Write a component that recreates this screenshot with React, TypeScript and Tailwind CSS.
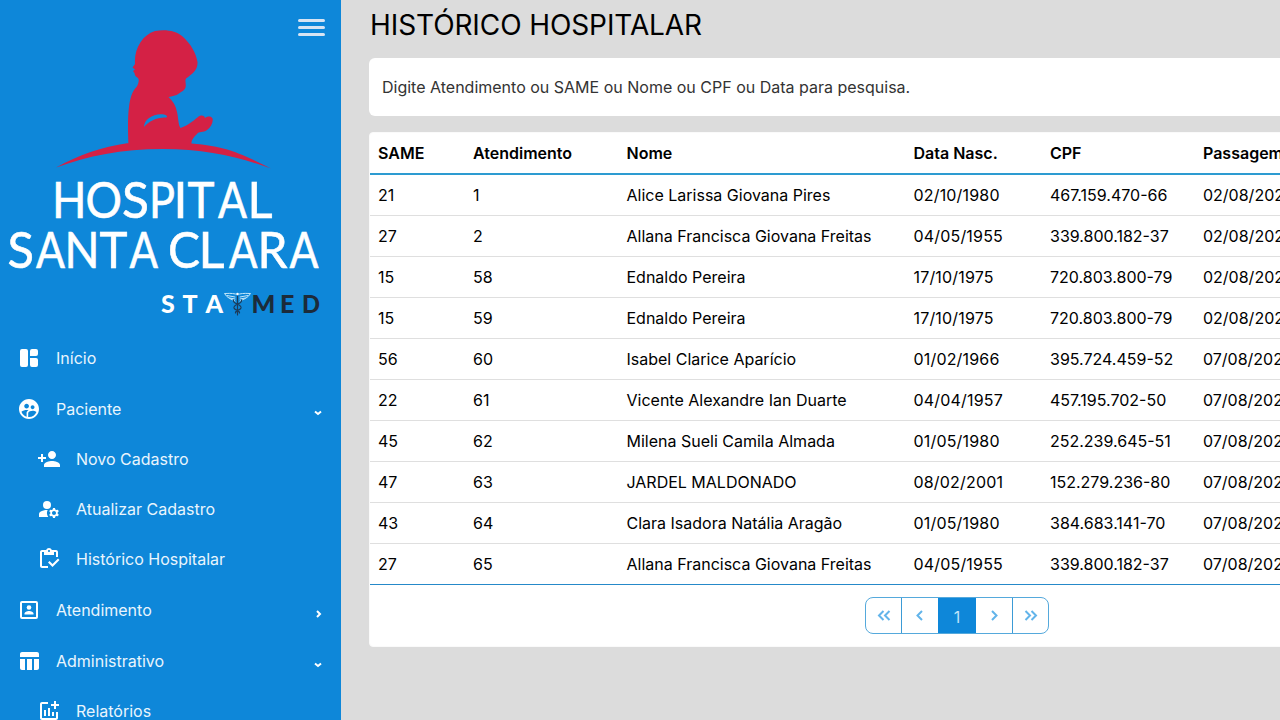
import type { ComponentType } from "react";
import {
  MdSupervisedUserCircle,
  MdPersonAdd,
  MdManageAccounts,
  MdOutlineInventory,
  MdTableChart,
  MdOutlineAddchart,
} from "react-icons/md";

type Icon = ComponentType<{ className?: string }>;
type Entry = { label: string; icon: Icon; sub?: boolean; arrow?: "down" | "right" };

function DashboardIcon({ className }: { className?: string }) {
  return (
    <svg viewBox="0 0 24 24" fill="currentColor" className={className}>
      <path d="M5 3h4a2 2 0 0 1 2 2v14a2 2 0 0 1-2 2H5a2 2 0 0 1-2-2V5a2 2 0 0 1 2-2ZM13 5a2 2 0 0 1 2-2h4a2 2 0 0 1 2 2v3a2 2 0 0 1-2 2h-6ZM13 12h6a2 2 0 0 1 2 2v5a2 2 0 0 1-2 2h-4a2 2 0 0 1-2-2Z" />
    </svg>
  );
}

function AccountIcon({ className }: { className?: string }) {
  return (
    <svg viewBox="0 0 24 24" className={className}>
      <rect x="4" y="4" width="16" height="16" rx="1" fill="none" stroke="currentColor" strokeWidth="2" />
      <circle cx="12" cy="9.500" r="2.300" fill="currentColor" />
      <path d="M7.500 16.500v-.9c0-1.700 3-2.600 4.500-2.600s4.500.9 4.500 2.600v.9Z" fill="currentColor" />
    </svg>
  );
}

function PersonAddIcon({ className }: { className?: string }) {
  return <MdPersonAdd className={className} />;
}

const menu: Entry[] = [
  { label: "Início", icon: DashboardIcon },
  { label: "Paciente", icon: MdSupervisedUserCircle, arrow: "down" },
  { label: "Novo Cadastro", icon: PersonAddIcon, sub: true },
  { label: "Atualizar Cadastro", icon: MdManageAccounts, sub: true },
  { label: "Histórico Hospitalar", icon: MdOutlineInventory, sub: true },
  { label: "Atendimento", icon: AccountIcon, arrow: "right" },
  { label: "Administrativo", icon: MdTableChart, arrow: "down" },
  { label: "Relatórios", icon: MdOutlineAddchart, sub: true },
];

const headers = ["SAME", "Atendimento", "Nome", "Data Nasc.", "CPF", "Passagem"];

const rows = [
  ["21", "1", "Alice Larissa Giovana Pires", "02/10/1980", "467.159.470-66", "02/08/2022"],
  ["27", "2", "Allana Francisca Giovana Freitas", "04/05/1955", "339.800.182-37", "02/08/2022"],
  ["15", "58", "Ednaldo Pereira", "17/10/1975", "720.803.800-79", "02/08/2022"],
  ["15", "59", "Ednaldo Pereira", "17/10/1975", "720.803.800-79", "02/08/2022"],
  ["56", "60", "Isabel Clarice Aparício", "01/02/1966", "395.724.459-52", "07/08/2022"],
  ["22", "61", "Vicente Alexandre Ian Duarte", "04/04/1957", "457.195.702-50", "07/08/2022"],
  ["45", "62", "Milena Sueli Camila Almada", "01/05/1980", "252.239.645-51", "07/08/2022"],
  ["47", "63", "JARDEL MALDONADO", "08/02/2001", "152.279.236-80", "07/08/2022"],
  ["43", "64", "Clara Isadora Natália Aragão", "01/05/1980", "384.683.141-70", "07/08/2022"],
  ["27", "65", "Allana Francisca Giovana Freitas", "04/05/1955", "339.800.182-37", "07/08/2022"],
];

const columns = "grid grid-cols-[95px_153.5px_287px_136.5px_153px_160px] pl-2";

// Letter, left edge and advance width of each glyph in the wordmark.
type Glyph = [string, number, number];
const hospital: Glyph[] = [
  ["H", 52, 34.5], ["O", 85.5, 36.5], ["S", 122, 27], ["P", 149, 26],
  ["I", 173.5, 14], ["T", 187.5, 27], ["A", 218, 29], ["L", 247.5, 25],
];
const santaClara: Glyph[] = [
  ["S", 7.5, 26.5], ["A", 36, 29], ["N", 64.5, 35], ["T", 99.5, 28], ["A", 129.5, 28.5],
  ["C", 168, 32], ["L", 198.5, 26], ["A", 229, 28.5], ["R", 257.5, 30], ["A", 289.5, 29],
];

function Wordmark({ glyphs, y }: { glyphs: Glyph[]; y: number }) {
  return (
    <text y={y} fontSize="50" fill="#fff" stroke="#fff" strokeWidth="0.6">
      {glyphs.map(([letter, x, width], i) => (
        <tspan key={i} x={x} textLength={width} lengthAdjust="spacingAndGlyphs">{letter}</tspan>
      ))}
    </text>
  );
}

function Logo() {
  return (
    <svg width="341" height="332" viewBox="0 0 341 332" className="block shrink-0">
      <g fill="#d42145">
        <path d="M128.500 146 C128 134 127.500 118 129 107 C130 99 132 91 136.500 87 C138.500 84 139.500 80 138 78 C136 77 134.500 75 134.500 73 L133 71 L135 69.500 L132.500 67.500 L135 64 C134 49 142 35 155 31 C166 29 176 31 182 36 C191 44 196 53 197.500 62 C198 70 192 74 186 78.500 C184.500 81 186.500 84 185.500 87.500 C184 91 182 91 179 93.500 C176 96 172 96 168.500 97 C173 101 176 106 177 112 C178.500 118 178 124 180.500 128 C187 126 193 121 198 117 C201 115 204 115 205 118 C208 116 211 116 212.500 118.500 C213.500 122 211 127 207 130 C203 133 199 131 197 134 C194 137 191 140 191.500 143.500 C229 146 247 157 271 168.500 C239 157 206 149 163 149 C121 149 88 156 56 167.500 C79 155 101 147 128.500 143 Z" />
      </g>
      <path d="M144 127 C144 119 154 113 164 114.500 C166 115 168 116 166.500 117.500 C157 117 149 121 144 127 Z" fill="#0e87d9" />
      <g fontFamily="Lato, sans-serif">
        <Wordmark glyphs={hospital} y={218} />
        <Wordmark glyphs={santaClara} y={268} />
      </g>
      <g fontFamily="Lato, sans-serif" fontWeight="900" fontSize="25">
        <text x="161" y="313" fill="#fff">S</text>
        <text x="182.500" y="313" fill="#fff">T</text>
        <text x="205.500" y="313" fill="#fff">A</text>
        <text x="251.500" y="313" fill="#1c2b3a">M</text>
        <text x="280" y="313" fill="#1c2b3a">E</text>
        <text x="302" y="313" fill="#1c2b3a" textLength="18" lengthAdjust="spacingAndGlyphs">D</text>
      </g>
      <g fill="none" strokeLinecap="round">
        <path d="M235.500 294 C231 293 228 293.500 224.500 293.500 C227 298 231 299 235 301 M227 295.500 L235 297 M229.500 298 L235 299 M239.500 294 C244 293 247 293.500 250.500 293.500 C248 298 244 299 240 301 M248 295.500 L240 297 M245.500 298 L240 299" stroke="#c3e8fb" strokeWidth="1" />
        <path d="M237.500 296 V315 M233.500 300 C232 304 242 304 241 308 C240 311 235 310 235.500 313 M241.500 300 C243 304 233 304 234 308 C235 311 240 310 239.500 313" stroke="#1c3b59" strokeWidth="1.200" />
        <circle cx="237.500" cy="294" r="1.300" fill="#fff" />
      </g>
    </svg>
  );
}

function Arrow({ direction }: { direction: "down" | "right" }) {
  return (
    <svg width="8" height="8" viewBox="0 0 8 8" className="relative top-1 ml-auto" fill="none" stroke="#fff" strokeWidth="2">
      <path d={direction === "down" ? "M1 2.500 L4 5 L7 2.500" : "M3 1 L6 4 L3 7"} />
    </svg>
  );
}

function Chevrons({ left, double }: { left?: boolean; double?: boolean }) {
  const d = left
    ? double ? "M7.500 2 L3 6.500 L7.500 11 M13.500 2 L9 6.500 L13.500 11" : "M10 2 L5.500 6.500 L10 11"
    : double ? "M2.500 2 L7 6.500 L2.500 11 M8.500 2 L13 6.500 L8.500 11" : "M6 2 L10.500 6.500 L6 11";
  return (
    <svg width="16" height="13" viewBox="0 0 16 13" fill="none" stroke="#62b4ea" strokeWidth="2" className="-mt-px">
      <path d={d} />
    </svg>
  );
}

export default function App() {
  return (
    <div className="flex h-[720px] w-[1280px] overflow-hidden bg-[#dcdcdc] font-['Inter',sans-serif] text-base text-black">
      <aside className="relative flex w-[341px] shrink-0 flex-col overflow-hidden bg-[#0e87d9] text-white">
        <Logo />
        <button className="absolute top-[19px] left-[298px] flex flex-col gap-1" aria-label="Menu">
          <span className="h-[3px] w-[27px] rounded-sm bg-[#d7e4f3]" />
          <span className="h-[3px] w-[27px] rounded-sm bg-[#d7e4f3]" />
          <span className="h-[3px] w-[27px] rounded-sm bg-[#d7e4f3]" />
        </button>
        <nav className="flex flex-col">
          {menu.map(({ label, icon: ItemIcon, sub, arrow }) => (
            <a
              key={label}
              className={
                sub
                  ? "flex h-[50px] shrink-0 items-center gap-[15px] pl-[37px]"
                  : "flex h-[51px] shrink-0 items-center gap-[15px] pr-[19px] pl-[17px]"
              }
            >
              <ItemIcon className="size-6" />
              <span className="text-[#e9f5fd]">{label}</span>
              {arrow && <Arrow direction={arrow} />}
            </a>
          ))}
        </nav>
      </aside>
      <main className="flex min-w-0 flex-1 flex-col overflow-hidden pl-7">
        <h1 className="mt-[7px] h-[51px] pl-px text-[28px] leading-9 tracking-[-0.1px]">HISTÓRICO HOSPITALAR</h1>
        <div className="flex h-[58px] w-[1176px] shrink-0 items-center rounded-md bg-white pl-[13px] text-[#333]">
          Digite Atendimento ou SAME ou Nome ou CPF ou Data para pesquisa.
        </div>
        <section className="mt-4 flex h-[515px] w-[1176px] shrink-0 flex-col rounded border border-[#fafafa] bg-white">
          <div className={`${columns} h-[42px] shrink-0 items-center border-b-2 border-[#2d9bd1] font-semibold`}>
            {headers.map((h) => (
              <span key={h}>{h}</span>
            ))}
          </div>
          {rows.map((row, i) => (
            <div
              key={row[1]}
              className={`${columns} h-[41px] shrink-0 items-center border-b ${i === rows.length - 1 ? "border-[#2589c9]" : "border-[#dfdfdf]"}`}
            >
              {row.map((cell, j) => (
                <span key={j} className={j === 3 ? "tracking-[0.18px] whitespace-nowrap" : "whitespace-nowrap"}>{cell}</span>
              ))}
            </div>
          ))}
          <div className="mt-3 flex h-[37px] w-[184px] self-center overflow-hidden rounded-lg border border-[#55a9dc]">
            <button className="flex w-9 items-center justify-center border-r border-[#3b9bd6]"><Chevrons left double /></button>
            <button className="flex w-9 items-center justify-center"><Chevrons left /></button>
            <button className="flex w-[38px] items-center justify-center bg-[#0e87d9] pt-0.5 text-[#bfe3fa]">1</button>
            <button className="flex w-[37px] items-center justify-center border-r border-[#3b9bd6]"><Chevrons /></button>
            <button className="flex flex-1 items-center justify-center"><Chevrons double /></button>
          </div>
        </section>
      </main>
    </div>
  );
}
